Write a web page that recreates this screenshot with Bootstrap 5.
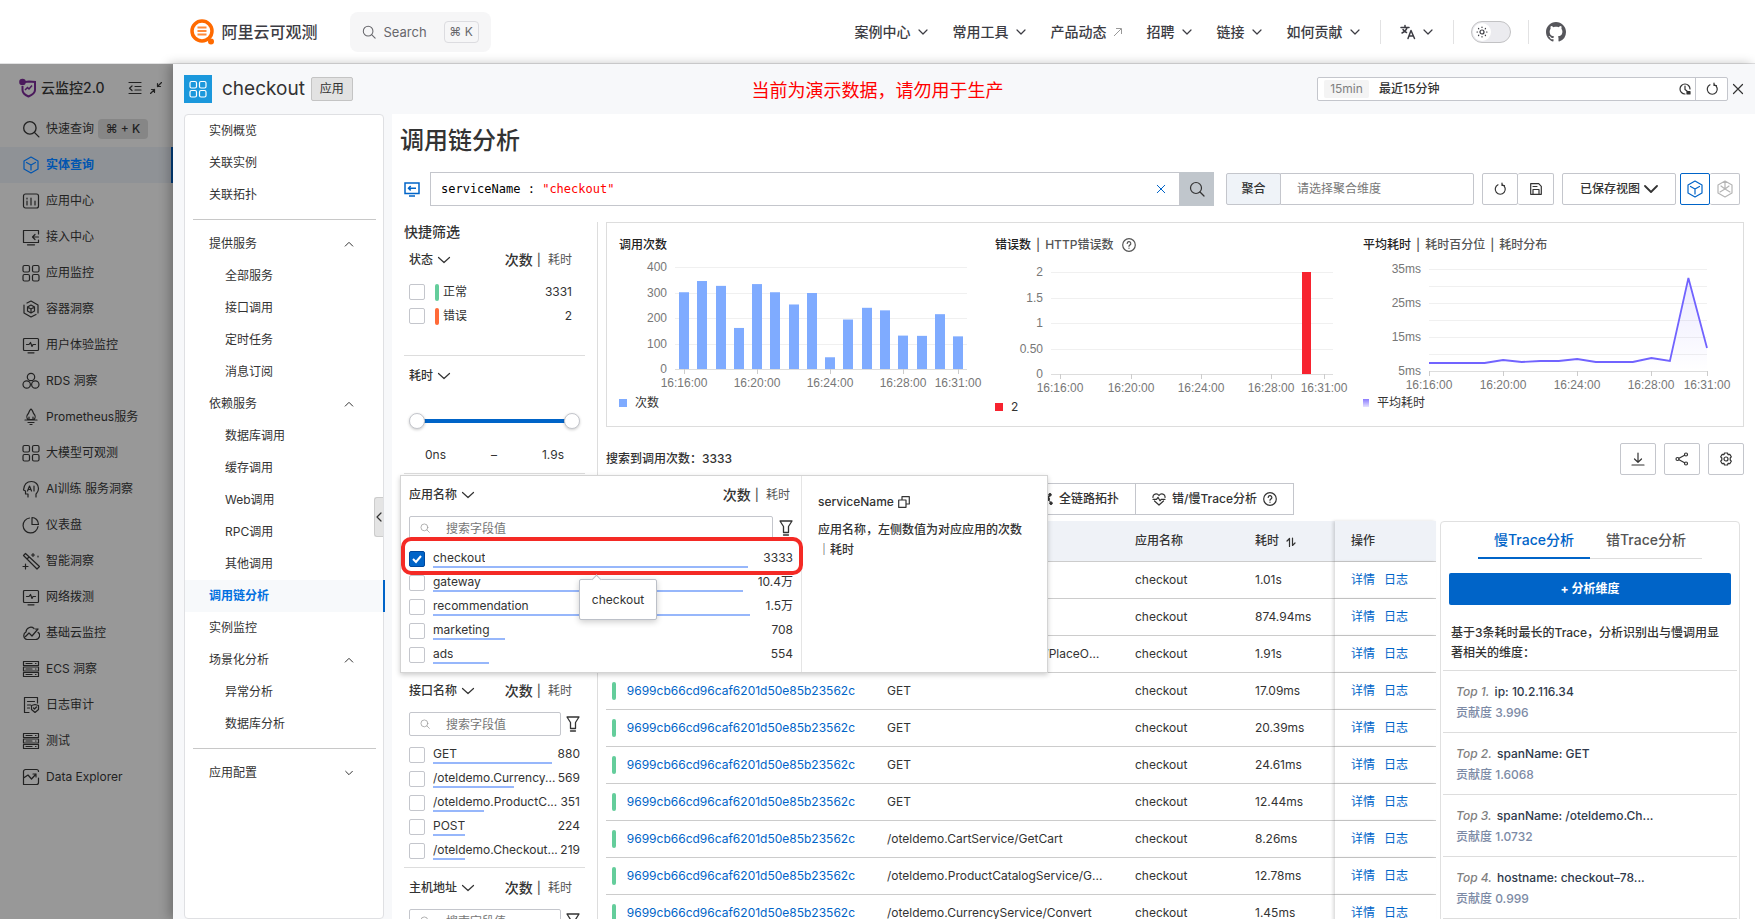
<!DOCTYPE html>
<html lang="zh-CN">
<head>
<meta charset="utf-8">
<meta name="viewport" content="width=device-width, initial-scale=1">
<title>调用链分析 - 阿里云可观测</title>
<link href="https://cdn.jsdelivr.net/npm/bootstrap@5.3.0/dist/css/bootstrap.min.css" rel="stylesheet">
<style>
:root{--blue:#0064c8;--line:#ddd;--ctl:#c4c6cc;--ink:#333}
body{font:12px/20px Inter,"Noto Sans CJK SC",sans-serif;color:var(--ink);background:#fff}
a{text-decoration:none;color:inherit}
button{font:inherit;color:inherit}
svg{flex:none}
.ic{fill:none;stroke:currentColor;stroke-width:1.2;stroke-linecap:round;stroke-linejoin:round}
.i10{width:10px;height:10px}.i12{width:12px;height:12px}.i14{width:14px;height:14px}.i16{width:16px;height:16px}.i18{width:18px;height:18px}
.shell{height:100vh;overflow:hidden}
.fw5{font-weight:500}
/* site header */
.topbar{height:64px;border-bottom:1px solid #e2e2e3;flex:none}
.topbar .inner{max-width:1376px;width:100%;color:#3c3c43}
.brandname{font-size:16px;font-weight:500}
.searchbtn{width:141px;height:40px;background:#f6f6f7;border:0;border-radius:8px;padding:0 12px;font-size:13px;color:#67676c;margin-left:32px}
.keycap{border:1px solid #dcdce0;border-radius:4px;height:22px;width:35px;font-size:12px;line-height:20px;text-align:center}
.sitenav{gap:24px;font-size:14px;font-weight:500}
.sitenav a{display:flex;align-items:center;gap:6px}
.sitetools{gap:17px;margin-left:-5px}
.sitetools .lang{margin:0 2px}
.vsep{width:1px;height:24px;background:#e2e2e3}
.toggler{width:40px;height:22px;border:1px solid #c2c2c4;border-radius:11px;background:#ebebef;padding:1px}
.toggler span{width:18px;height:18px;border-radius:50%;background:#fff;display:flex;align-items:center;justify-content:center}
/* dimmed product rail */
.rail{width:173px;background:#989898;color:#222;flex:none}
.rail .head{height:47px;font-size:14px;font-weight:500;padding:0 11px 0 19px}
.rail a{display:flex;align-items:center;gap:6px;height:36px;padding-left:22px;white-space:nowrap}
.rail a.on{background:#8f9296;color:#0055b0;font-weight:700;border-right:2px solid #003d7c}
.rail .keys{background:#868686;border-radius:4px;height:20px;width:50px;text-align:center;margin-left:-2px;font-weight:500}
/* drawer */
.drawer{background:#f7f8fa;box-shadow:-4px 0 10px rgba(0,0,0,.25);min-width:0}
.dhead{height:50px;padding:0 11px;position:relative;flex:none}
.appicon{width:28px;height:28px;background:#1b98dc;color:#fff}
.appname{font-size:19px;line-height:28px;margin:0 6px 0 10px}
.kind{background:#e2e2e2;border:1px solid #c4c4c4;border-radius:2px;height:24px;width:42px;text-align:center;line-height:22px}
.demo{position:absolute;left:-173px;right:0;text-align:center;color:#f00;font-size:18px;pointer-events:none;padding-top:3px}
.timepick{width:411px;height:24px;border:1px solid var(--ctl);border-radius:2px;background:#fff}
.timepick .tagmin{background:#f4f4f4;color:#808080;width:45px;text-align:center;height:18px;line-height:18px;border-radius:2px;margin:0 10px 0 6px}
.timepick input{border:0;outline:0;min-width:0;padding:0;font-weight:500;color:var(--ink)}
.timepick button{width:32px;border:0;border-left:1px solid var(--ctl);background:none;height:22px}
.plain{border:0;background:none;padding:0}
.side{width:200px;background:#fff;border:1px solid #dfe0e3;border-radius:4px;position:relative;flex:none;margin-left:11px}
.side a{display:flex;align-items:center;justify-content:space-between;height:32px;padding:0 29px 0 24px}
.side a.sub{padding-left:40px}
.side a.on{background:#f7f9fb;color:#0070e0;font-weight:700;border-right:2px solid var(--blue);margin-right:-2px}
.side hr{margin:8px 7px 8px 8px;border-top:1px solid #c8c8c8;opacity:1}
.grip{position:absolute;right:0;top:382px;width:9px;height:40px;background:#e4e4e4;border:1px solid #ccc;border-right:0;border-radius:3px 0 0 3px;display:flex;align-items:center;padding:0}
.main{background:#fff;padding:9px 11px 0 12px;min-width:0}
.main h1{font-size:24px;line-height:36px;font-weight:500;margin:0 0 13px -4px}
.qrow{height:34px}
.qbox{margin-left:10px}
.editor{border:1px solid var(--ctl);height:34px;font:12px/32px "DejaVu Sans Mono",monospace;padding-left:10px;color:#000}
.editor span{color:#f00}
.qclear{right:48px;color:var(--blue)}
.qgo{width:34px;height:34px;background:#c0c6cc;border:0;border-radius:0}
.ctlbox{height:32px;border:1px solid var(--ctl);border-radius:2px;background:#fff;display:flex;align-items:center;justify-content:center;padding:0}
.agg{width:55px;background:#eff3f8;margin-left:12px}
.aggsel{width:194px;border:1px solid var(--ctl);margin-left:-1px;height:32px;appearance:none;padding:0 16px;color:#777;background:#fff;border-radius:0 2px 2px 0;font:inherit}
.saved{width:114px}
.viewbtn{width:30px;color:#b5b5b5}
.viewbtn.on{border-color:var(--blue);color:var(--blue)}
/* quick filter */
.filters{width:194px;border-right:1px solid var(--line);padding-right:12px;flex:none;height:720px}
.filters h2{font-size:14px;line-height:20px;margin:0;font-weight:500}
.stateblock{height:113px;padding:6px 5px 0}
.timeblock{height:118px}
.fblock{border-top:1px solid var(--line);padding:8px 5px 2px}
.fhead{height:24px;display:flex;align-items:center;gap:4px;font-weight:500}
.fhead .cnt{margin-left:auto;font-size:14px}
.fhead .alt{color:#555;margin:0 8px 0 3px;font-weight:400}
.fhead .bar{color:#555}
.fsearch{display:flex;align-items:center;gap:5px;margin:9px 0 7px}
.fsearch label{display:flex;align-items:center;border:1px solid var(--ctl);border-radius:2px;height:24px;flex:1;padding-left:10px;gap:16px;min-width:0;color:#999}
.fsearch input{border:0;outline:0;min-width:0;width:100%;padding:0;background:none;height:22px}
.fsearch input::placeholder{color:#777;opacity:1}
.fsearch .ic{color:#333}
.fsearch label .ic{color:#999}
.frow{display:flex;align-items:center;height:24px;gap:8px}
.frow input,.srow input{appearance:none;width:16px;height:16px;border:1px solid var(--ctl);border-radius:2px;margin:0;background:#fff;flex:none}
.frow input:checked{background:var(--blue) url("data:image/svg+xml,%3Csvg xmlns='http://www.w3.org/2000/svg' viewBox='0 0 14 14'%3E%3Cpath d='M3 7l3 3 5-6' fill='none' stroke='white' stroke-width='2'/%3E%3C/svg%3E");border-color:#00489c}
.frow label{flex:1;min-width:0;position:relative;display:flex;justify-content:space-between;height:20px;line-height:18px}
.frow label .nm{overflow:hidden;text-overflow:ellipsis;white-space:nowrap}
.frow label i{position:absolute;left:0;bottom:1px;height:2px;background:#97b7fb}
#apis{padding-bottom:2px}
.srow{display:flex;align-items:center;height:24px;padding:0 8px 0 0}
.srow label{flex:1;display:flex;align-items:center;line-height:20px}
.pill{width:4px;height:17px;border-radius:2px;margin:0 4px 0 10px;background:#64cd9b}
.pill.err{background:#ff6a38}
.range2{position:relative;height:16px;margin-top:25px}
.range2::before{content:"";position:absolute;left:8px;right:8px;top:6px;height:4px;background:var(--blue)}
.range2 input{position:absolute;left:0;top:0;width:100%;height:16px;margin:0;appearance:none;background:none;pointer-events:none}
.range2 input::-webkit-slider-thumb{appearance:none;width:16px;height:16px;border-radius:50%;background:#fff;border:1px solid #c4c6cc;box-shadow:0 1px 3px rgba(0,0,0,.2);pointer-events:auto}
/* overlay with field values */
.appblock{position:relative;height:197px}
.flyout{position:absolute;left:-4px;top:1px;width:648px;height:198px;background:#fff;border:1px solid #d4d4d4;box-shadow:0 2px 5px rgba(0,0,0,.2);z-index:5;display:flex}
.flyout .fl{width:401px;border-right:1px solid #e5e5e5;padding:7px 8px 0}
.flyout .alt{margin-right:3px}
.flyout .fsearch label{margin-right:1px}
.flyout .fr{flex:1;padding:16px 20px 0 16px;font-weight:500}
.ring{position:absolute;left:0;top:61px;width:402px;height:38px;border:4px solid #f42a25;border-radius:10px;pointer-events:none}
.tipbox{position:absolute;left:178px;top:103px;width:78px;height:41px;background:#fff;border:1px solid #bcc0c8;border-radius:2px;box-shadow:0 2px 6px rgba(0,0,0,.2);line-height:40px;text-align:center}
.tipbox::before{content:"";position:absolute;left:13px;top:-4px;width:7px;height:7px;background:#fff;border:1px solid #bcc0c8;border-width:1px 0 0 1px;transform:rotate(45deg)}
/* charts */
.charts{display:grid;grid-template-columns:376fr 368fr 380fr;border:1px solid var(--line);height:205px;padding-left:12px;margin-bottom:16px}
.chart .ttl{height:20px;font-weight:500;display:flex;align-items:center;gap:5px;margin-top:12px;color:#555}
.chart .ttl b{color:#222;font-weight:500}
.chart svg.plot{display:block;width:100%;height:138px;overflow:visible}
.plot text{font:12px "Liberation Sans",Arial,sans-serif;fill:#777}
.legend{display:flex;align-items:center;gap:8px}
.swatch{width:8px;height:8px}
.swatch.calls{background:#7fabff}
.swatch.errors{background:#f7232f}
.swatch.avg{width:6px;background:linear-gradient(#8a7bff,#e6e3ff)}
.iconbtn{width:36px;height:32px}
.gbtn{height:32px;border:1px solid var(--ctl);background:#fff;display:flex;align-items:center;gap:6px;padding:0 16px;font-weight:500}
.groupshift{margin:8px 0 6px 418px}
/* table */
.traces{table-layout:fixed;width:100%;border-collapse:separate;border-spacing:0}
.traces .c2{width:248px}.traces .c3{width:120px}.traces .c4{width:96px}.traces .c5{width:101px}
.traces th{height:41px;background:#eff2f7;font-weight:500;border-bottom:1px solid #ccc;padding:0 16px}
.traces td{height:37px;border-bottom:1px solid #ccc;padding:0 16px;white-space:nowrap;overflow:hidden;text-overflow:ellipsis;background:#fff}
.traces td:first-child{padding-left:6px}
.traces td:first-child div{display:flex;align-items:center}
.traces td .pill{height:18px;margin:0 11px 0 0}
.traces a{color:var(--blue)}
.traces .op{box-shadow:-2px 0 3px rgba(0,0,0,.14);position:relative}
.traces .op a+a{margin-left:9px}
.analysis{width:300px;border:1px solid #e0e0e0;border-radius:4px;flex:none;margin:0 4px;height:460px}
.analysis .tabs2{display:flex;margin:0 37px 14px}
.analysis .tabs2 button{width:112px;height:37px;border:0;border-bottom:1px solid #ddd;background:none;font-size:14px;font-weight:500;color:#555;padding:0}
.analysis .tabs2 button.on{color:var(--blue);border-bottom:2px solid var(--blue)}
.addbtn{width:282px;height:32px;margin:0 8px;background:var(--blue);border:0;border-radius:2px;color:#fff;font-weight:700}
.analysis p{margin:18px 10px 7px}
.topitem{border-top:1px solid #ddd;height:62px;margin:0 2px;padding:10px 13px 0;line-height:21px;color:#2f3a4c;font-weight:500}
.topitem em{color:#808080;margin-right:2px}
.topitem div{color:#7c8aa5}
</style>
</head>
<body>
<svg width="0" height="0" class="position-absolute">
<defs>
<symbol id="dn" viewBox="0 0 12 12"><path d="M2 4l4 4 4-4"/></symbol>
<symbol id="big" viewBox="0 0 14 14"><path d="M1.500 4.500l5.500 5 5.500-5"/></symbol>
<symbol id="up" viewBox="0 0 12 12"><path d="M1.500 8.500L6 4l4.500 4.500"/></symbol>
<symbol id="mag" viewBox="0 0 16 16"><circle cx="7" cy="7" r="5.500"/><path d="M11 11l4 4"/></symbol>
<symbol id="cube" viewBox="0 0 18 18"><path d="M9 1l7 4v8l-7 4-7-4V5zM4.500 6.500L9 9l4.500-2.500M9 9v5"/></symbol>
<symbol id="bars" viewBox="0 0 18 18"><rect x="1.500" y="2" width="15" height="14" rx="2"/><path d="M5 6v1m0 2v4M9 6v7M13 9v4"/></symbol>
<symbol id="enter" viewBox="0 0 18 18"><path d="M16.500 6V2.500h-15v12h15V12M5.500 16.800h7M16.500 9h-6m2.500-2.500L10.500 9l2.500 2.500"/></symbol>
<symbol id="four" viewBox="0 0 18 18"><rect x="1" y="1.500" width="6.500" height="6.500" rx="1.500"/><rect x="10.500" y="1.500" width="6.500" height="6.500" rx="1.500"/><rect x="1" y="10.500" width="6.500" height="6.500" rx="1.500"/><rect x="10.500" y="10.500" width="6.500" height="6.500" rx="1.500"/></symbol>
<symbol id="box" viewBox="0 0 18 18"><path d="M5 3l4-2 7 4v8M14 14.500L9 17l-7-4V5"/><path d="M9 5l3.500 2v4L9 13l-3.500-2V7zM5.500 7L9 9l3.500-2M9 9v4"/></symbol>
<symbol id="mon" viewBox="0 0 18 18"><rect x="1.500" y="2.500" width="15" height="12" rx="1"/><path d="M6 16.800h6M4.500 8.500H7L8.500 6.500l1.500 4 1-2h2.500"/></symbol>
<symbol id="tri" viewBox="0 0 18 18"><circle cx="9" cy="5" r="3.700"/><circle cx="4.700" cy="12.500" r="3.700"/><circle cx="13.300" cy="12.500" r="3.700"/></symbol>
<symbol id="prom" viewBox="0 0 18 18"><path d="M9 1c2.500 2 1.500 3.500 3 5s1.500 4 0 5.500H6c-1.500-1.500-1.500-4 0-5.500s.5-3 3-5zM3 12h12M6 14.500h6M8 16.500h2M7 9v2M11 9v2"/></symbol>
<symbol id="ai" viewBox="0 0 18 18"><path d="M6 17v-3H3.500v-3L1.500 10C2 4 5 1.500 9.500 1.500c4 0 7 3 7 7 0 3-1.500 4-2.500 5.500V17M5.500 11l2-5 2 5M6.200 9.500h2.600M12 6v5"/></symbol>
<symbol id="pie" viewBox="0 0 18 18"><path d="M7.500 2A7.500 7.500 0 1 0 16 10.500"/><path d="M10 1.500V8.500h6.500C16.500 4.500 13.500 1.500 10 1.500z"/></symbol>
<symbol id="wand" viewBox="0 0 18 18"><path d="M1.500 3.500l2-2 14 13-2.500 2.500zM5 7l2-2M11 1.500v3M9.500 3h3M16 4v1M3.500 12v5M1 14.500h5"/></symbol>
<symbol id="cloud" viewBox="0 0 18 18"><path d="M12 4.500A4.800 4.800 0 0 0 4 8 4 4 0 0 0 5 15.500h8.500a4 4 0 0 0 2.500-7.200M3.500 12.500L7 9l3 3 6-7m0 0h-2.500"/></symbol>
<symbol id="srv" viewBox="0 0 18 18"><rect x="1.500" y="1.500" width="15" height="4"/><rect x="1.500" y="7" width="15" height="4"/><rect x="1.500" y="12.500" width="15" height="4"/><path d="M4 3.500h6M4 9h6M4 14.500h6M13.500 3.500h.5M13.500 9h.5M13.500 14.500h.5"/></symbol>
<symbol id="log" viewBox="0 0 18 18"><path d="M15.500 7V1.500h-13v15H7M5.500 5.500h7M5.500 9h3M5.500 12h2M9.500 9.500L13 8.500l3.500 1v4L13 16.500l-3.500-3zM11.500 12l1 1 2-2"/></symbol>
<symbol id="data" viewBox="0 0 18 18"><path d="M16.500 10v4.500a2 2 0 0 1-2 2h-13V3.500a2 2 0 0 1 2-2h11a2 2 0 0 1 2 2M1.500 10L6 7l3.500 4L14 6m0 0h-3m3 0v3"/></symbol>
<symbol id="ref" viewBox="0 0 14 14"><path d="M5 2.800A5 5 0 1 0 9.500 2.800M9 1v2.500h2.500"/></symbol>
<symbol id="x" viewBox="0 0 12 12"><path d="M1.500 1.500l9 9M10.500 1.500l-9 9"/></symbol>
<symbol id="funnel" viewBox="0 0 14 16"><path d="M1 1h12L9.500 6.500v6h-5v-6zM4.500 15h5" stroke-width="1.300"/></symbol>
<symbol id="help" viewBox="0 0 14 14"><circle cx="7" cy="7" r="6.300"/><path d="M5.200 5.500a1.800 1.800 0 1 1 2.600 1.600c-.6.300-.8.600-.8 1.200M7 10v.3"/></symbol>
</defs>
</svg>
<div class="shell d-flex flex-column">
<header class="topbar d-flex justify-content-center">
 <div class="inner d-flex align-items-center">
  <a href="#" class="d-flex align-items-center gap-2">
   <svg width="24" height="26" viewBox="0 0 24 26"><circle cx="12" cy="12" r="10" fill="none" stroke="#ff6a00" stroke-width="3.500"/><circle cx="21" cy="22.500" r="3" fill="#ff6a00"/><path d="M7.500 8.500h9M7.500 12h9M7.500 15.500h9" stroke="#ff8a3a" stroke-width="2"/></svg>
   <span class="brandname">阿里云可观测</span></a>
  <button class="searchbtn d-flex align-items-center"><svg class="ic i14 me-2"><use href="#mag"/></svg>Search<span class="keycap ms-auto">⌘ K</span></button>
  <nav class="sitenav d-flex align-items-center ms-auto">
   <a href="#">案例中心<svg class="ic i12"><use href="#dn"/></svg></a>
   <a href="#">常用工具<svg class="ic i12"><use href="#dn"/></svg></a>
   <a href="#">产品动态<svg class="i10" viewBox="0 0 10 10" fill="none" stroke="#999"><path d="M1 9l7-7M3 1.500h5.500V7"/></svg></a>
   <a href="#">招聘<svg class="ic i12"><use href="#dn"/></svg></a>
   <a href="#">链接<svg class="ic i12"><use href="#dn"/></svg></a>
   <a href="#">如何贡献<svg class="ic i12"><use href="#dn"/></svg></a>
   <div class="sitetools d-flex align-items-center">
   <span class="vsep"></span>
   <a href="#" class="lang" aria-label="语言"><svg class="ic i16" viewBox="0 0 16 16"><path d="M1 3.500h8M5 1.500v2M2 9c3-1.500 4.500-3 5-5.500M3 5.500c1 1.500 2 2.500 3.500 3M8 14.500l3-8 3.500 8M9.200 12h4" stroke-width="1.500"/></svg><svg class="ic i12"><use href="#dn"/></svg></a>
   <span class="vsep"></span>
   <button class="toggler" aria-label="深色模式"><span><svg class="ic i12" viewBox="0 0 12 12"><circle cx="6" cy="6" r="2"/><path d="M6 1v.5M6 10.500v.5M1 6h.5M10.500 6h.5M2.500 2.500l.3.3M9.200 9.200l.3.3M9.500 2.500l-.3.300M2.800 9.200l-.3.300"/></svg></span></button>
   <span class="vsep"></span>
   <a href="#" aria-label="GitHub"><svg width="20" height="20" viewBox="0 0 16 16" fill="#56565b"><path d="M8 0C3.580 0 0 3.580 0 8c0 3.540 2.290 6.530 5.470 7.590.4.070.55-.17.55-.38 0-.19-.01-.82-.01-1.490-2.010.37-2.530-.49-2.690-.94-.09-.23-.48-.94-.82-1.130-.28-.15-.68-.52-.01-.53.63-.01 1.080.58 1.230.82.720 1.210 1.870.87 2.330.66.070-.52.280-.87.510-1.070-1.780-.2-3.640-.89-3.640-3.950 0-.87.310-1.590.82-2.150-.08-.2-.36-1.020.08-2.120 0 0 .67-.21 2.200.82.640-.18 1.320-.27 2-.27s1.360.09 2 .27c1.530-1.040 2.200-.82 2.200-.82.440 1.100.160 1.920.080 2.120.510.560.820 1.270.820 2.150 0 3.070-1.870 3.750-3.650 3.950.290.250.540.730.540 1.480 0 1.070-.01 1.930-.01 2.200 0 .21.150.46.550.38A8.010 8.010 0 0 0 16 8c0-4.420-3.580-8-8-8z"/></svg></a>
   </div>
  </nav>
 </div>
</header>
<div class="d-flex flex-grow-1" style="min-height:0">
 <aside class="rail">
  <div class="head d-flex align-items-center">
   <svg width="18" height="20" viewBox="0 0 18 20" class="me-1"><path d="M6 4l4-.5 6 .5v8c0 3-3 5-6.500 6.500C6 17 3.500 15 3.500 12V8" fill="none" stroke="#4b1a5c" stroke-width="2"/><circle cx="3.500" cy="4" r="3.300" fill="#4b1a5c"/><path d="M6 12l2.500-2.500 1.500 1.500 3-3.500" fill="none" stroke="#4b1a5c" stroke-width="1.500"/></svg>
   云监控2.0
   <svg class="ic i14 ms-auto me-2" viewBox="0 0 14 14"><path d="M1 1.500h12M7 5.500h6M7 9h6M1 12.500h12M4 5L1.500 7.200 4 9.500"/></svg>
   <svg class="ic i12" viewBox="0 0 12 12"><path d="M11.500.5L7.500 4.500M7.500 1.500v3h3M.5 11.500l4-4M1.500 7.500h3v3"/></svg>
  </div>
  <nav id="rail"></nav>
 </aside>
 <section class="drawer flex-grow-1 d-flex flex-column">
  <div class="dhead d-flex align-items-center">
   <span class="appicon d-flex align-items-center justify-content-center"><svg class="ic i18"><use href="#four"/></svg></span>
   <span class="appname">checkout</span><span class="kind">应用</span>
   <div class="demo">当前为演示数据，请勿用于生产</div>
   <div class="timepick d-flex align-items-center ms-auto"><span class="tagmin">15min</span><input class="flex-grow-1" value="最近15分钟" aria-label="时间范围">
    <svg class="ic i12 me-1" viewBox="0 0 12 12"><path d="M6 11A5 5 0 1 1 11 6M6 3v3.500L8 8"/><path d="M8 8.500h3v2.500H8z" fill="currentColor"/></svg>
    <button aria-label="刷新" class="d-flex align-items-center justify-content-center"><svg class="ic i14"><use href="#ref"/></svg></button></div>
   <button class="plain d-flex ms-1" aria-label="关闭"><svg class="ic i12"><use href="#x"/></svg></button>
  </div>
  <div class="d-flex flex-grow-1" style="min-height:0">
   <nav class="side" id="side"></nav>
   <main class="main flex-grow-1 ms-2">
    <h1>调用链分析</h1>
    <div class="qrow d-flex align-items-center">
     <svg class="i16" viewBox="0 0 16 16" fill="none" stroke="#0064c8" stroke-width="1.500"><path d="M1 2h14v10.500H1zM5 15h6M12 7.200H4.500m2.200-2.200L4.500 7.200l2.200 2.200"/></svg>
     <div class="qbox flex-grow-1 d-flex position-relative">
      <div class="editor flex-grow-1" contenteditable="true" role="textbox" spellcheck="false" aria-label="查询语句">serviceName : <span>"checkout"</span></div>
      <button class="qclear plain position-absolute top-50 translate-middle-y d-flex" aria-label="清除"><svg class="ic i10"><use href="#x"/></svg></button>
      <button class="qgo d-flex align-items-center justify-content-center" aria-label="查询"><svg class="ic i16"><use href="#mag"/></svg></button>
     </div>
     <label class="ctlbox agg fw5" for="aggsel">聚合</label>
     <select class="aggsel me-2" id="aggsel"><option>请选择聚合维度</option></select>
     <button class="ctlbox iconbtn" aria-label="刷新"><svg class="ic i14"><use href="#ref"/></svg></button>
     <button class="ctlbox iconbtn border-start-0 me-2" aria-label="保存"><svg class="ic i12" viewBox="0 0 12 12"><path d="M.7.7h8l2.600 2.600v8H.7zM3 11V6.500h6V11M3 3.500h4"/></svg></button>
     <button class="ctlbox saved fw5 gap-1">已保存视图<svg class="ic i14" viewBox="0 0 14 14"><path d="M1 4l6 6 6-6" stroke-width="1.800"/></svg></button>
     <button class="ctlbox viewbtn on ms-1" aria-label="实体视图"><svg class="ic i18"><use href="#cube"/></svg></button>
     <button class="ctlbox viewbtn border-start-0 me-1" aria-label="拓扑视图"><svg class="ic i18" viewBox="0 0 18 18"><path d="M9 1l7 4v8l-7 4-7-4V5zM9 1v8M9 9l-5 3M9 9l5 3M5 6l4 3 4-3"/></svg></button>
    </div>
    <div class="d-flex mt-3">
     <div class="filters">
      <h2>快捷筛选</h2>
      <div class="stateblock">
       <div class="fhead mb-2">状态<svg class="ic i14"><use href="#big"/></svg><span class="cnt">次数</span><span class="bar">|</span><span class="alt">耗时</span></div>
       <div class="srow"><input type="checkbox" id="s1"><label for="s1"><span class="pill"></span>正常<span class="ms-auto">3331</span></label></div>
       <div class="srow"><input type="checkbox" id="s2"><label for="s2"><span class="pill err"></span>错误<span class="ms-auto">2</span></label></div>
      </div>
      <div class="fblock timeblock">
       <div class="fhead">耗时<svg class="ic i14"><use href="#big"/></svg></div>
       <div class="range2"><input type="range" value="0" aria-label="最小耗时"><input type="range" value="100" aria-label="最大耗时"></div>
       <div class="d-flex justify-content-between px-3 mt-3"><span>0ns</span><span>–</span><span>1.9s</span></div>
      </div>
      <div class="fblock appblock">
       <div class="flyout">
        <div class="fl">
         <div class="fhead">应用名称<svg class="ic i14"><use href="#big"/></svg><span class="cnt">次数</span><span class="bar">|</span><span class="alt">耗时</span></div>
         <div class="fsearch"><label><svg class="ic i10"><use href="#mag"/></svg><input placeholder="搜索字段值" aria-label="搜索应用名称"></label><svg class="ic" width="14" height="16"><use href="#funnel"/></svg></div>
         <div id="apps"></div>
        </div>
        <div class="fr"><div class="d-flex align-items-center mb-2">serviceName<svg class="ic i12 ms-1" viewBox="0 0 12 12"><path d="M.7 4h7.300v7.300H.7zM4 3.500V.7h7.300V8H8.500"/></svg></div>应用名称，左侧数值为对应应用的次数｜耗时</div>
        <div class="ring"></div>
        <div class="tipbox" role="tooltip">checkout</div>
       </div>
      </div>
      <div class="fblock">
       <div class="fhead">接口名称<svg class="ic i14"><use href="#big"/></svg><span class="cnt">次数</span><span class="bar">|</span><span class="alt">耗时</span></div>
       <div class="fsearch"><label><svg class="ic i10"><use href="#mag"/></svg><input placeholder="搜索字段值" aria-label="搜索接口名称"></label><svg class="ic" width="14" height="16"><use href="#funnel"/></svg></div>
       <div id="apis"></div>
      </div>
      <div class="fblock">
       <div class="fhead">主机地址<svg class="ic i14"><use href="#big"/></svg><span class="cnt">次数</span><span class="bar">|</span><span class="alt">耗时</span></div>
       <div class="fsearch"><label><svg class="ic i10"><use href="#mag"/></svg><input placeholder="搜索字段值" aria-label="搜索主机地址"></label><svg class="ic" width="14" height="16"><use href="#funnel"/></svg></div>
      </div>
     </div>
     <div class="flex-grow-1 ms-2" style="min-width:0">
      <div class="charts">
       <div class="chart"><div class="ttl"><b>调用次数</b></div><svg class="plot" id="c1" viewBox="0 0 376 138" preserveAspectRatio="xMinYMin meet"></svg><div class="legend"><span class="swatch calls"></span>次数</div></div>
       <div class="chart"><div class="ttl"><b>错误数</b>| <span>HTTP错误数</span><svg class="ic i14 ms-1"><use href="#help"/></svg></div><svg class="plot" id="c2" viewBox="0 0 368 138" preserveAspectRatio="xMinYMin meet"></svg><div class="legend pt-1"><span class="swatch errors"></span>2</div></div>
       <div class="chart"><div class="ttl"><b>平均耗时</b>| <span>耗时百分位</span>| <span>耗时分布</span></div><svg class="plot" id="c3" viewBox="0 0 380 138" preserveAspectRatio="xMinYMin meet"></svg><div class="legend"><span class="swatch avg"></span>平均耗时</div></div>
      </div>
      <div class="d-flex align-items-center gap-2"><span class="me-auto fw5">搜索到调用次数：3333</span>
       <button class="ctlbox iconbtn" aria-label="下载"><svg class="ic i14" viewBox="0 0 14 14"><path d="M7 1v9M3.500 7L7 10.300 10.500 7M1 13h12"/></svg></button>
       <button class="ctlbox iconbtn" aria-label="分享"><svg class="ic i14" viewBox="0 0 14 14"><circle cx="2.500" cy="7" r="1.500"/><circle cx="11" cy="2.500" r="1.500"/><circle cx="11" cy="11.500" r="1.500"/><path d="M4 6.200l5.600-3M4 7.800l5.600 3"/></svg></button>
       <button class="ctlbox iconbtn" aria-label="设置"><svg class="ic i14" viewBox="0 0 14 14"><path d="M5.500 1h3l.5 1.700 1.800-.4 1.500 2.500L11.200 6v2l1.100 1.200-1.500 2.500-1.800-.4-.5 1.700h-3L5 11.300l-1.800.4-1.500-2.500L2.800 8V6L1.700 4.800l1.500-2.500 1.800.4z"/><circle cx="7" cy="7" r="2"/></svg></button>
      </div>
      <div class="groupshift d-flex">
       <button class="gbtn"><svg class="i12" viewBox="0 0 12 12" fill="currentColor" stroke="currentColor"><circle cx="2" cy="6" r="1.500"/><circle cx="9" cy="1.800" r="1.300"/><circle cx="10" cy="10.200" r="1.300"/><circle cx="7" cy="6" r="1.500"/><path d="M2 6h5l2-4M7 6l3 4"/></svg>全链路拓扑</button>
       <button class="gbtn border-start-0"><svg class="ic i14" viewBox="0 0 14 14"><path d="M1 5.500C.5 2 5 .5 7 3.500 9 .5 13.500 2 13 5.500M2.500 9L7 13l4.500-4M1 7.300h3.500l1.500-2 2 3.500 1.200-1.500H13"/></svg>错/慢Trace分析<svg class="ic i14"><use href="#help"/></svg></button>
      </div>
      <div class="d-flex align-items-start">
       <div class="flex-grow-1" style="min-width:0">
       <table class="traces">
        <colgroup><col><col class="c2"><col class="c3"><col class="c4"><col class="c5"></colgroup>
        <thead><tr><th></th><th></th><th>应用名称</th><th>耗时 <svg class="ic i10 ms-1" viewBox="0 0 10 10"><path d="M1 4l2.500-2.500v8M6.500 1v7.500L9 6"/></svg></th><th class="op">操作</th></tr></thead>
        <tbody id="rows"></tbody>
       </table></div>
       <aside class="analysis">
        <div class="tabs2"><button class="on">慢Trace分析</button><button>错Trace分析</button></div>
        <button class="addbtn">+ 分析维度</button>
        <p class="fw5">基于3条耗时最长的Trace，分析识别出与慢调用显著相关的维度：</p>
        <div class="topitem"><em>Top 1.</em> ip: 10.2.116.34<div>贡献度 3.996</div></div>
        <div class="topitem"><em>Top 2.</em> spanName: GET<div>贡献度 1.6068</div></div>
        <div class="topitem"><em>Top 3.</em> spanName: /oteldemo.Ch...<div>贡献度 1.0732</div></div>
        <div class="topitem"><em>Top 4.</em> hostname: checkout–78...<div>贡献度 0.999</div></div>
        <div class="topitem"></div>
       </aside>
      </div>
     </div>
    </div>
   </main>
  </div>
 </section>
</div>
</div>
<script>
const $ = id => document.getElementById(id);
$('rail').innerHTML = [['mag','快速查询'],['cube','实体查询'],['bars','应用中心'],['enter','接入中心'],['four','应用监控'],['box','容器洞察'],['mon','用户体验监控'],['tri','RDS 洞察'],['prom','Prometheus服务'],['four','大模型可观测'],['ai','AI训练 服务洞察'],['pie','仪表盘'],['wand','智能洞察'],['mon','网络拨测'],['cloud','基础云监控'],['srv','ECS 洞察'],['log','日志审计'],['srv','测试'],['data','Data Explorer']]
 .map(([i,t],n)=>`<a href="#"${n==1?' class="on"':''}><svg class="ic i18"><use href="#${i}"/></svg>${t}${n?'':'<span class="keys">⌘ + K</span>'}</a>`).join('');
const chev = d => `<svg class="ic i10"><use href="#${d}"/></svg>`;
$('side').innerHTML = '实例概览,关联实例,关联拓扑,-,^提供服务,>全部服务,>接口调用,>定时任务,>消息订阅,^依赖服务,>数据库调用,>缓存调用,>Web调用,>RPC调用,>其他调用,*调用链分析,实例监控,^场景化分析,>异常分析,>数据库分析,-,v应用配置'.split(',')
 .map(t=>t=='-'?'<hr>':t[0]=='^'?`<a href="#">${t.slice(1)}${chev('up')}</a>`:t[0]=='v'?`<a href="#">${t.slice(1)}${chev('dn')}</a>`:t[0]=='>'?`<a href="#" class="sub">${t.slice(1)}</a>`:t[0]=='*'?`<a href="#" class="on">${t.slice(1)}</a>`:`<a href="#">${t}</a>`).join('')
 + '<button class="grip" aria-label="收起"><svg class="ic" width="8" height="12" viewBox="0 0 8 12"><path d="M6 2L2 6l4 4"/></svg></button>';
const frows = (id,list) => $(id).innerHTML = list.map(([n,v,w,c],i)=>`<div class="frow"><input type="checkbox" id="${id+i}"${c?' checked':''}><label for="${id+i}"><span class="nm">${n}</span><span>${v}</span><i style="width:${w}%"></i></label></div>`).join('');
frows('apps',[['checkout','3333',87.5,1],['gateway','10.4万',86],['recommendation','1.5万',88],['marketing','708',20],['ads','554',15.500]]);
frows('apis',[['GET','880',81],['/oteldemo.Currency...','569',55],['/oteldemo.ProductC...','351',35],['POST','224',22],['/oteldemo.Checkout...','219',22]]);
const trace = '9699cb66cd96caf6201d50e85b23562c';
$('rows').innerHTML = [['','1.01s'],['','874.94ms'],['/oteldemo.CheckoutService/PlaceOrder','1.91s'],['GET','17.09ms'],['GET','20.39ms'],['GET','24.61ms'],['GET','12.44ms'],['/oteldemo.CartService/GetCart','8.26ms'],['/oteldemo.ProductCatalogService/G...','12.78ms'],['/oteldemo.CurrencyService/Convert','1.45ms']]
 .map(([s,d],i)=>`<tr><td><div><span class="pill"></span><a href="#">${i<3?'':trace}</a></div></td><td>${s}</td><td>checkout</td><td>${d}</td><td class="op"><a href="#">详情</a><a href="#">日志</a></td></tr>`).join('');
// Draws the grid, the value labels and the time axis of one plot.
function axes(x0,x1,y0,y1,lines,labels,ticks){
 let s='';
 for(let i=0;i<=lines;i++){const y=Math.round(y1-(y1-y0)*i/lines)+.5;s+=`<path d="M${x0} ${y}H${x1}" stroke="${i?'#f0f0f0':'#ddd'}"/>`;}
 labels.forEach((t,i)=>s+=`<text x="${x0-8}" y="${Math.round(y1-(y1-y0)*i/(labels.length-1))+4}" text-anchor="end">${t}</text>`);
 ['16:16:00','16:20:00','16:24:00','16:28:00','16:31:00'].forEach((t,i)=>s+=`<path d="M${ticks[i]+.5} ${y1}v5" stroke="#ccc"/><text x="${ticks[i]}" y="${y1+18}" text-anchor="middle">${t}</text>`);
 return s;
}
$('c1').innerHTML = axes(56,348,12,114,4,['0','100','200','300','400'],[65,138,211,284,339])
 + [301,345,326,161,333,301,253,298,46,194,240,230,131,130,215,128].map((v,i)=>`<rect x="${Math.round(60+i*18.270)}" y="${114-v*.255}" width="10" height="${v*.255}" fill="#7fabff"/>`).join('');
$('c2').innerHTML = axes(56,338,17,119,4,['0','0.50','1','1.5','2'],[65,136,206,276,329]) + '<rect x="307" y="17" width="9" height="102" fill="#f7232f"/>';
const pts=[108,108,108,108,105,107,106,106,104,107,107,107,103,106,23,93].map((y,i)=>(66+i*18.530).toFixed(1)+','+y).join(' ');
$('c3').innerHTML = '<defs><linearGradient id="g" x2="0" y2="1"><stop stop-color="#7b6cff" stop-opacity=".15"/><stop offset="1" stop-color="#7b6cff" stop-opacity="0"/></linearGradient></defs>'
 + axes(66,344,14,116,6,['5ms','15ms','25ms','35ms'],[66,140,214,288,344]) + `<polygon points="66,116 ${pts} 344,116" fill="url(#g)"/><polyline points="${pts}" fill="none" stroke="#7163ff" stroke-width="1.800"/>`;
</script>
<script src="https://cdn.jsdelivr.net/npm/bootstrap@5.3.0/dist/js/bootstrap.bundle.min.js"></script>
</body>
</html>
